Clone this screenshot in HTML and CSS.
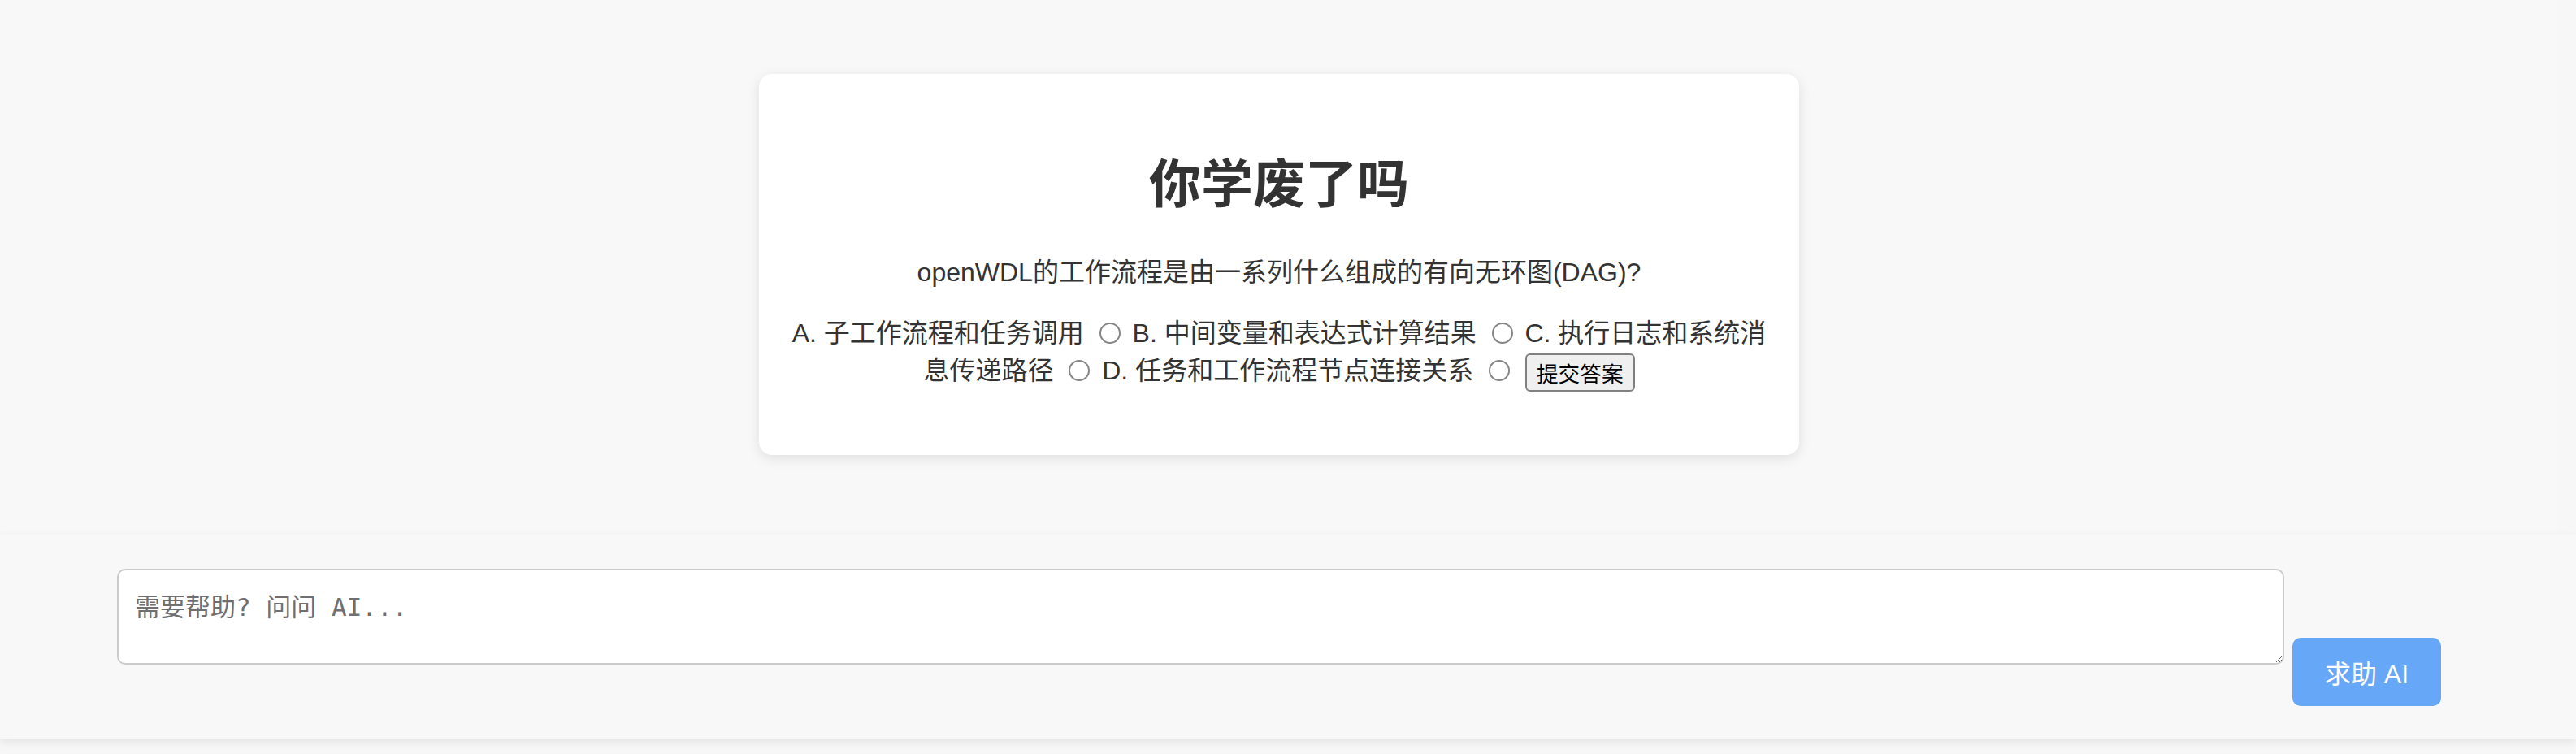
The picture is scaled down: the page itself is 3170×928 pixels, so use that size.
FILE: index.html
```html
<!DOCTYPE html>
<html lang="zh-CN">
<head>
<meta charset="utf-8">
<title>你学废了吗</title>
<link rel="stylesheet" href="styles.css">
</head>
<body>
<div class="page">
  <main class="main">
    <section class="quiz">
      <h1 class="quiz-title">你学废了吗</h1>
      <p class="quiz-question">openWDL的工作流程是由一系列什么组成的有向无环图(DAG)?</p>
      <form class="quiz-options">
        <label class="opt">A. 子工作流程和任务调用 <input class="radio" type="radio" name="answer" value="A"></label>
        <label class="opt">B. 中间变量和表达式计算结果 <input class="radio" type="radio" name="answer" value="B"></label>
        <label class="opt">C. 执行日志和系统消息传递路径 <input class="radio" type="radio" name="answer" value="C"></label>
        <label class="opt">D. 任务和工作流程节点连接关系 <input class="radio" type="radio" name="answer" value="D"></label>
        <button class="submit" type="button">提交答案</button>
      </form>
    </section>
  </main>
  <div class="ask">
    <textarea class="ask-input" placeholder="需要帮助? 问问 AI..."></textarea>
    <button class="ask-btn" type="button">求助 AI</button>
  </div>
</div>
</body>
</html>
```
FILE: styles.css
```css
html, body {
  margin: 0;
  padding: 0;
  background: #f7f7f7;
}
body {
  font-family: "Liberation Sans", "Noto Sans CJK SC", sans-serif;
  font-size: 32px;
  color: #333;
  height: 928px;
  overflow: hidden;
}
.page {
  margin-right: 22px;
}
.main {
  height: 657px;
  box-sizing: border-box;
  padding-top: 91px;
  background: #f8f8f8;
}
.quiz {
  width: 1280px;
  box-sizing: border-box;
  margin: 0 auto;
  padding: 40px;
  background: #fff;
  border-radius: 16px;
  box-shadow: 0 4px 16px rgba(0, 0, 0, 0.10);
  text-align: center;
}
.quiz-title {
  font-size: 64px;
  font-weight: bold;
  margin: 44px 0 42px;
  color: #333;
}
.quiz-question {
  margin: 32px 0;
}
.quiz-options {
  margin: 28px 0 38px;
  line-height: 46px;
}
.radio {
  appearance: none;
  -webkit-appearance: none;
  box-sizing: border-box;
  width: 26px;
  height: 26px;
  margin: 0 6px 0 10px;
  border: 2px solid #858585;
  border-radius: 50%;
  background: #fff;
  vertical-align: middle;
  position: relative;
  top: -3px;
}
.submit {
  font-family: "Liberation Sans", "Noto Sans CJK SC", sans-serif;
  font-size: 26.67px;
  line-height: normal;
  color: #000;
  background: #efefef;
  border: 2px solid #808080;
  border-radius: 6px;
  padding: 2px 12px;
  margin-left: 4px;
  vertical-align: middle;
}
.ask {
  display: flex;
  align-items: flex-start;
  gap: 10px;
  height: 253px;
  box-sizing: border-box;
  padding: 42px 166px 41px 144px;
  margin-right: -22px;
  background: #f8f8f8;
  border-top: 1px solid #f5f5f5;
  box-shadow: 0 4px 10px rgba(0, 0, 0, 0.08);
}
.ask-input {
  flex: 1;
  height: 118px;
  box-sizing: border-box;
  padding: 20px;
  border: 2px solid #cbcbcb;
  border-radius: 10px;
  background: #fff;
  font-family: "DejaVu Sans Mono", "Noto Sans CJK SC", monospace;
  font-size: 31px;
  color: #333;
  resize: vertical;
}
.ask-input::placeholder {
  color: #6f6f6f;
}
.ask-btn {
  align-self: flex-end;
  width: 183px;
  height: 84px;
  border: none;
  border-radius: 10px;
  background: #67a7f7;
  color: #fff;
  font-family: "Liberation Sans", "Noto Sans CJK SC", sans-serif;
  font-size: 32px;
  padding: 0;
}
```
